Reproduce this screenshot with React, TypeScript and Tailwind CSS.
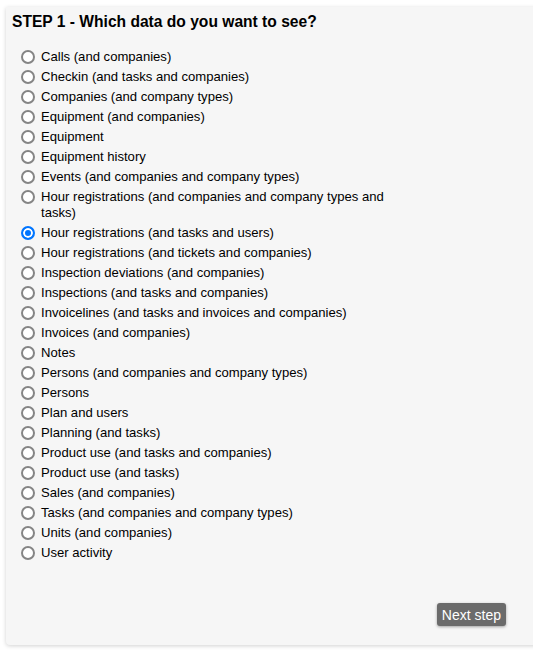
import { useState } from "react"

const options = [
  "Calls (and companies)",
  "Checkin (and tasks and companies)",
  "Companies (and company types)",
  "Equipment (and companies)",
  "Equipment",
  "Equipment history",
  "Events (and companies and company types)",
  "Hour registrations (and companies and company types and tasks)",
  "Hour registrations (and tasks and users)",
  "Hour registrations (and tickets and companies)",
  "Inspection deviations (and companies)",
  "Inspections (and tasks and companies)",
  "Invoicelines (and tasks and invoices and companies)",
  "Invoices (and companies)",
  "Notes",
  "Persons (and companies and company types)",
  "Persons",
  "Plan and users",
  "Planning (and tasks)",
  "Product use (and tasks and companies)",
  "Product use (and tasks)",
  "Sales (and companies)",
  "Tasks (and companies and company types)",
  "Units (and companies)",
  "User activity",
]

export default function App() {
  const [selected, setSelected] = useState(8)

  return (
    <div className="h-[651px] overflow-hidden bg-white pt-[7px] pl-[6px] font-['Liberation_Sans',Arial,sans-serif]">
      <div className="-mr-[10px] flex h-[638px] flex-col rounded-bl-[4px] bg-[#f6f6f6] shadow-[0_1px_4px_rgba(0,0,0,0.18)]">
        {/* Title */}
        <h2 className="pl-[6px] pt-[6px] text-[15.6px] font-bold leading-[18px] text-black">
          STEP 1 - Which data do you want to see?
        </h2>

        {/* Options */}
        <div className="mt-[18px] flex flex-col gap-[4px] pl-[15px]">
          {options.map((label, i) => (
            <label key={label} className="flex cursor-pointer items-start gap-[6px]">
              <input
                type="radio"
                name="dataset"
                checked={selected === i}
                onChange={() => setSelected(i)}
                className="mt-[1px] h-[14px] w-[14px] shrink-0 appearance-none rounded-full border-2 border-[#858585] bg-white checked:border-[#0075ff] checked:bg-[#0075ff] checked:shadow-[inset_0_0_0_2px_#fff]"
              />
              <span className="w-[360px] text-[13.1px] leading-[16px] text-black">{label}</span>
            </label>
          ))}
        </div>

        <div className="flex-1" />

        {/* Footer */}
        <div className="flex justify-end pb-[19px] pr-[37px]">
          <button className="h-[23px] rounded-[3px] bg-[#6b6b6b] px-[5px] text-[14px] leading-[16px] text-white shadow-[0_1px_3px_rgba(0,0,0,0.35)]">
            Next step
          </button>
        </div>
      </div>
    </div>
  )
}
